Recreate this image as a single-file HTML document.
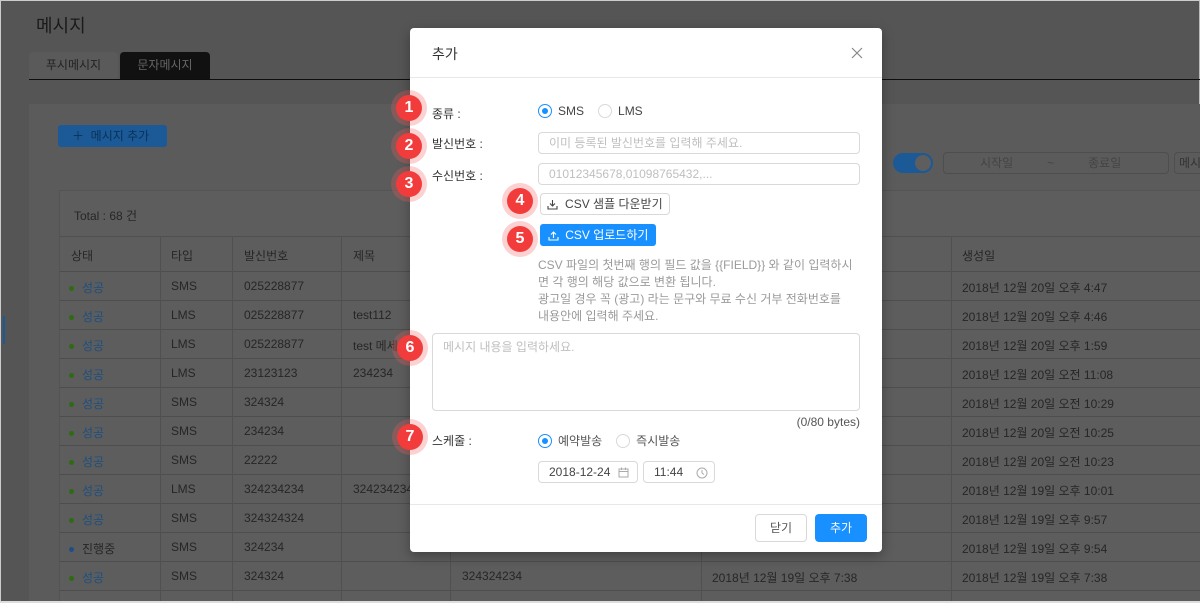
<!DOCTYPE html>
<html><head><meta charset="utf-8"><style>
*{box-sizing:border-box;margin:0;padding:0}
body{width:1200px;height:603px;overflow:hidden;background:#555;font-family:"Liberation Sans","Noto Sans CJK KR",sans-serif;font-size:12px;color:#222;position:relative}
.a{position:absolute}
.frame{left:0;top:0;width:1200px;height:603px;border:1px solid #ccc;border-right-color:#bbb}
.row{left:59px;width:1141px;height:29px;border-bottom:1px solid #4e4e4e}
.c{position:absolute;top:7px;color:#262626;font-size:12px}
.st{color:#1d4f80}
.dot{display:inline-block;width:5px;height:5px;border-radius:50%;background:#2f6b10;margin-right:8px;vertical-align:middle}
.vl{top:237px;height:366px;width:1px;background:#505050}
.modal{left:410px;top:28px;width:472px;height:524px;background:#fff;border-radius:4px;box-shadow:0 4px 12px rgba(0,0,0,.3)}
.lbl{color:#333;font-size:12px}
.inp{border:1px solid #d9d9d9;border-radius:4px;background:#fff;color:#bfbfbf;font-size:12px;padding:3px 10px;line-height:14px}
.radio{display:inline-block;width:14px;height:14px;border:1px solid #d9d9d9;border-radius:50%;vertical-align:-3px;margin-right:6px;position:relative}
.radio.on{border-color:#1890ff}
.radio.on:after{content:"";position:absolute;left:3px;top:3px;width:6px;height:6px;border-radius:50%;background:#1890ff}
.badge{width:26px;height:26px;border-radius:50%;background:#f23c3c;color:#fff;font-weight:bold;font-size:16px;text-align:center;line-height:26px;box-shadow:0 0 0 5px rgba(242,90,90,.28)}
.btn{border:1px solid #d9d9d9;border-radius:4px;background:#fff;font-size:12px;text-align:center}
svg{vertical-align:-2px}
</style></head><body>
<div class="a frame"></div>
<div class="a" style="left:36px;top:12px;font-size:18px;color:#1a1a1a">메시지</div>
<div class="a" style="left:29px;top:52px;width:89px;height:27px;background:#5a5a5a;border-radius:4px 4px 0 0;color:#222;text-align:center;line-height:27px;font-size:12px">푸시메시지</div>
<div class="a" style="left:120px;top:52px;width:90px;height:27px;background:#111;border-radius:4px 4px 0 0;color:#666;text-align:center;line-height:27px;font-size:12px">문자메시지</div>
<div class="a" style="left:29px;top:79px;width:1171px;height:1px;background:#0e0e0e"></div>
<div class="a" style="left:29px;top:104px;width:1171px;height:499px;background:#5b5b5b"></div>
<div class="a" style="left:58px;top:125px;width:109px;height:22px;background:#1b5a96;border-radius:3px;color:#0b3157;font-size:12px;line-height:22px;padding-left:14px">＋&nbsp; 메시지 추가</div>
<div class="a" style="left:893px;top:153px;width:40px;height:20px;border-radius:10px;background:#1b5a96"><div style="position:absolute;right:2px;top:2px;width:16px;height:16px;border-radius:50%;background:#5e5e5e"></div></div>
<div class="a" style="left:943px;top:152px;width:226px;height:22px;border:1px solid #4e4e4e;border-radius:4px;color:#444;line-height:20px;font-size:12px"><span style="margin-left:36px">시작일</span><span style="margin-left:34px">~</span><span style="margin-left:34px">종료일</span></div>
<div class="a" style="left:1174px;top:152px;width:40px;height:22px;border:1px solid #4e4e4e;border-radius:4px;color:#333;line-height:20px;padding-left:4px">메시</div>
<div class="a" style="left:59px;top:190px;width:1141px;height:413px;border:1px solid #545454;border-right:none;background:#5d5d5d"></div>
<div class="a" style="left:74px;top:207px;color:#262626">Total : 68 건</div>
<div class="a" style="left:59px;top:236px;width:1141px;height:1px;background:#505050"></div>
<div class="a row" style="top:237px;height:35px"><span class="c" style="left:12px;top:10px">상태</span><span class="c" style="left:112px;top:10px">타입</span><span class="c" style="left:185px;top:10px">발신번호</span><span class="c" style="left:294px;top:10px">제목</span><span class="c" style="left:903px;top:10px">생성일</span></div>
<div class="a vl" style="left:160px"></div><div class="a vl" style="left:232px"></div><div class="a vl" style="left:341px"></div><div class="a vl" style="left:450px"></div><div class="a vl" style="left:701px"></div><div class="a vl" style="left:951px"></div>
<div class="a row" style="top:272px"><span class="c" style="left:10px"><span class="dot"></span><span class="st">성공</span></span><span class="c" style="left:112px">SMS</span><span class="c" style="left:185px">025228877</span><span class="c" style="left:903px">2018년 12월 20일 오후 4:47</span></div>
<div class="a row" style="top:301px"><span class="c" style="left:10px"><span class="dot"></span><span class="st">성공</span></span><span class="c" style="left:112px">LMS</span><span class="c" style="left:185px">025228877</span><span class="c" style="left:294px">test112</span><span class="c" style="left:903px">2018년 12월 20일 오후 4:46</span></div>
<div class="a row" style="top:330px"><span class="c" style="left:10px"><span class="dot"></span><span class="st">성공</span></span><span class="c" style="left:112px">LMS</span><span class="c" style="left:185px">025228877</span><span class="c" style="left:294px">test 메세</span><span class="c" style="left:903px">2018년 12월 20일 오후 1:59</span></div>
<div class="a row" style="top:359px"><span class="c" style="left:10px"><span class="dot"></span><span class="st">성공</span></span><span class="c" style="left:112px">LMS</span><span class="c" style="left:185px">23123123</span><span class="c" style="left:294px">234234</span><span class="c" style="left:903px">2018년 12월 20일 오전 11:08</span></div>
<div class="a row" style="top:388px"><span class="c" style="left:10px"><span class="dot"></span><span class="st">성공</span></span><span class="c" style="left:112px">SMS</span><span class="c" style="left:185px">324324</span><span class="c" style="left:903px">2018년 12월 20일 오전 10:29</span></div>
<div class="a row" style="top:417px"><span class="c" style="left:10px"><span class="dot"></span><span class="st">성공</span></span><span class="c" style="left:112px">SMS</span><span class="c" style="left:185px">234234</span><span class="c" style="left:903px">2018년 12월 20일 오전 10:25</span></div>
<div class="a row" style="top:446px"><span class="c" style="left:10px"><span class="dot"></span><span class="st">성공</span></span><span class="c" style="left:112px">SMS</span><span class="c" style="left:185px">22222</span><span class="c" style="left:903px">2018년 12월 20일 오전 10:23</span></div>
<div class="a row" style="top:475px"><span class="c" style="left:10px"><span class="dot"></span><span class="st">성공</span></span><span class="c" style="left:112px">LMS</span><span class="c" style="left:185px">324234234</span><span class="c" style="left:294px">324234234</span><span class="c" style="left:903px">2018년 12월 19일 오후 10:01</span></div>
<div class="a row" style="top:504px"><span class="c" style="left:10px"><span class="dot"></span><span class="st">성공</span></span><span class="c" style="left:112px">SMS</span><span class="c" style="left:185px">324324324</span><span class="c" style="left:903px">2018년 12월 19일 오후 9:57</span></div>
<div class="a row" style="top:533px"><span class="c" style="left:10px"><span class="dot" style="background:#1b4f86"></span>진행중</span><span class="c" style="left:112px">SMS</span><span class="c" style="left:185px">324234</span><span class="c" style="left:903px">2018년 12월 19일 오후 9:54</span></div>
<div class="a row" style="top:562px"><span class="c" style="left:10px"><span class="dot"></span><span class="st">성공</span></span><span class="c" style="left:112px">SMS</span><span class="c" style="left:185px">324324</span><span class="c" style="left:403px">324324234</span><span class="c" style="left:653px">2018년 12월 19일 오후 7:38</span><span class="c" style="left:903px">2018년 12월 19일 오후 7:38</span></div>
<div class="a" style="left:0;top:601px;width:1200px;height:2px;background:#ddd"></div>
<div class="a" style="left:3px;top:316px;width:2px;height:28px;background:#1b5a96"></div>

<div class="a modal">
<div class="a" style="left:22px;top:16px;font-size:14px;color:#333">추가</div>
<svg class="a" style="left:441px;top:19px" width="12" height="12" viewBox="0 0 12 12"><path d="M1 1L11 11M11 1L1 11" stroke="#888" stroke-width="1.2"/></svg>
<div class="a" style="left:0;top:49px;width:472px;height:1px;background:#e8e8e8"></div>
<div class="a lbl" style="left:22px;top:77px">종류 :</div>
<div class="a" style="left:128px;top:76px;color:#444"><span class="radio on"></span>SMS<span class="radio" style="margin-left:14px"></span>LMS</div>
<div class="a lbl" style="left:22px;top:107px">발신번호 :</div>
<div class="a inp" style="left:128px;top:104px;width:322px;height:22px">이미 등록된 발신번호를 입력해 주세요.</div>
<div class="a lbl" style="left:22px;top:139px">수신번호 :</div>
<div class="a inp" style="left:128px;top:135px;width:322px;height:22px">01012345678,01098765432,...</div>
<div class="a btn" style="left:130px;top:165px;width:130px;height:22px;line-height:20px;color:#444"><svg width="11" height="11" viewBox="0 0 11 11"><path d="M5.5 1V7M3 4.5L5.5 7L8 4.5M1 7V10H10V7" stroke="#444" stroke-width="1.1" fill="none"/></svg>&nbsp; CSV 샘플 다운받기</div>
<div class="a" style="left:130px;top:196px;width:116px;height:22px;background:#1890ff;border-radius:3px;color:#fff;line-height:22px;text-align:center"><svg width="11" height="11" viewBox="0 0 11 11"><path d="M5.5 8V2M3 4.5L5.5 2L8 4.5M1 7V10H10V7" stroke="#fff" stroke-width="1.1" fill="none"/></svg>&nbsp; CSV 업로드하기</div>
<div class="a" style="left:128px;top:229px;width:340px;color:#9a9a9a;line-height:17px;font-size:12px;white-space:nowrap">CSV 파일의 첫번째 행의 필드 값을 {{FIELD}} 와 같이 입력하시<br>면 각 행의 해당 값으로 변환 됩니다.<br>광고일 경우 꼭 (광고) 라는 문구와 무료 수신 거부 전화번호를<br>내용안에 입력해 주세요.</div>
<div class="a inp" style="left:22px;top:305px;width:428px;height:78px;padding-top:6px">메시지 내용을 입력하세요.</div>
<div class="a" style="right:22px;top:387px;color:#555">(0/80 bytes)</div>
<div class="a lbl" style="left:22px;top:404px">스케줄 :</div>
<div class="a" style="left:128px;top:404px;color:#555"><span class="radio on"></span>예약발송<span class="radio" style="margin-left:14px"></span>즉시발송</div>
<div class="a inp" style="left:128px;top:433px;width:100px;height:22px;color:#444">2018-12-24<svg style="position:absolute;right:8px;top:5px" width="11" height="11" viewBox="0 0 11 11"><path d="M1 2H10V10H1ZM1 4.5H10M3.5 0.5V3M7.5 0.5V3" stroke="#aaa" fill="none"/></svg></div>
<div class="a inp" style="left:233px;top:433px;width:72px;height:22px;color:#444">11:44<svg style="position:absolute;right:6px;top:5px" width="12" height="12" viewBox="0 0 12 12"><circle cx="6" cy="6" r="5" stroke="#aaa" fill="none"/><path d="M6 3V6L8 7.5" stroke="#aaa" fill="none"/></svg></div>
<div class="a" style="left:0;top:476px;width:472px;height:1px;background:#e8e8e8"></div>
<div class="a btn" style="left:345px;top:486px;width:52px;height:28px;line-height:26px;color:#555">닫기</div>
<div class="a" style="left:405px;top:486px;width:52px;height:28px;line-height:28px;background:#1890ff;border-radius:4px;color:#fff;text-align:center">추가</div>
</div>

<div class="a badge" style="left:396px;top:95px">1</div>
<div class="a badge" style="left:396px;top:133px">2</div>
<div class="a badge" style="left:396px;top:171px">3</div>
<div class="a badge" style="left:507px;top:188px">4</div>
<div class="a badge" style="left:507px;top:226px">5</div>
<div class="a badge" style="left:397px;top:335px">6</div>
<div class="a badge" style="left:397px;top:424px">7</div>
</body></html>
